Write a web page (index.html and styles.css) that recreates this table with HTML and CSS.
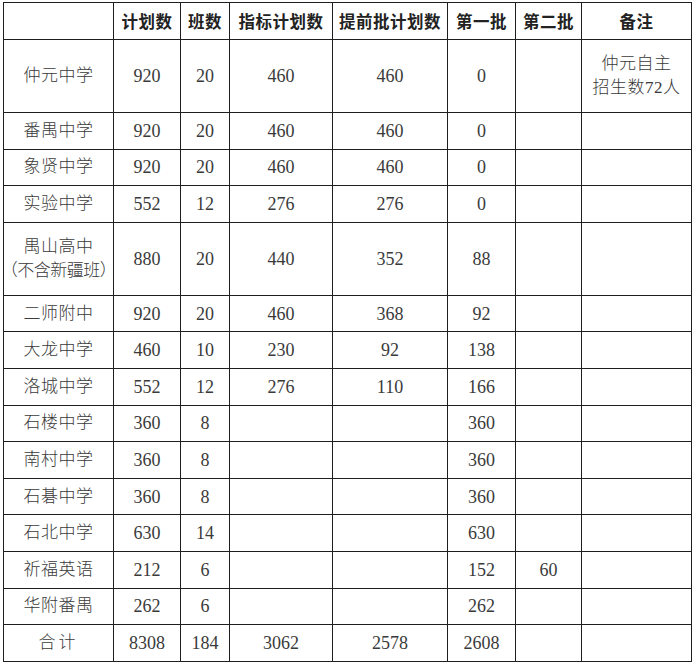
FILE: index.html
```html
<!DOCTYPE html>
<html lang="zh-CN">
<head>
<meta charset="utf-8">
<link rel="stylesheet" href="styles.css">
</head>
<body>
<table class="plan">
  <colgroup>
    <col class="c1"><col class="c2"><col class="c3"><col class="c4"><col class="c5"><col class="c6"><col class="c7"><col class="c8">
  </colgroup>
  <thead>
    <tr class="head">
      <th></th><th>计划数</th><th>班数</th><th>指标计划数</th><th>提前批计划数</th><th>第一批</th><th>第二批</th><th>备注</th>
    </tr>
  </thead>
  <tbody>
    <tr class="tall"><td class="name">仲元中学</td><td>920</td><td>20</td><td>460</td><td>460</td><td>0</td><td></td><td class="note">仲元自主<br>招生数72人</td></tr>
    <tr><td class="name">番禺中学</td><td>920</td><td>20</td><td>460</td><td>460</td><td>0</td><td></td><td></td></tr>
    <tr><td class="name">象贤中学</td><td>920</td><td>20</td><td>460</td><td>460</td><td>0</td><td></td><td></td></tr>
    <tr><td class="name">实验中学</td><td>552</td><td>12</td><td>276</td><td>276</td><td>0</td><td></td><td></td></tr>
    <tr class="tall"><td class="name">禺山高中<br><span class="paren">（不含新疆班）</span></td><td>880</td><td>20</td><td>440</td><td>352</td><td>88</td><td></td><td></td></tr>
    <tr><td class="name">二师附中</td><td>920</td><td>20</td><td>460</td><td>368</td><td>92</td><td></td><td></td></tr>
    <tr><td class="name">大龙中学</td><td>460</td><td>10</td><td>230</td><td>92</td><td>138</td><td></td><td></td></tr>
    <tr><td class="name">洛城中学</td><td>552</td><td>12</td><td>276</td><td>110</td><td>166</td><td></td><td></td></tr>
    <tr><td class="name">石楼中学</td><td>360</td><td>8</td><td></td><td></td><td>360</td><td></td><td></td></tr>
    <tr><td class="name">南村中学</td><td>360</td><td>8</td><td></td><td></td><td>360</td><td></td><td></td></tr>
    <tr><td class="name">石碁中学</td><td>360</td><td>8</td><td></td><td></td><td>360</td><td></td><td></td></tr>
    <tr><td class="name">石北中学</td><td>630</td><td>14</td><td></td><td></td><td>630</td><td></td><td></td></tr>
    <tr><td class="name">祈福英语</td><td>212</td><td>6</td><td></td><td></td><td>152</td><td>60</td><td></td></tr>
    <tr><td class="name">华附番禺</td><td>262</td><td>6</td><td></td><td></td><td>262</td><td></td><td></td></tr>
    <tr><td class="name total">合计</td><td>8308</td><td>184</td><td>3062</td><td>2578</td><td>2608</td><td></td><td></td></tr>
  </tbody>
</table>
</body>
</html>
```
FILE: styles.css
```css
html, body {
  margin: 0;
  padding: 0;
  background: #ffffff;
}
body {
  padding: 2px 0 0 3px;
}
.plan {
  border-collapse: collapse;
  table-layout: fixed;
  width: 689px;
  font-family: "Liberation Serif", "Noto Sans CJK SC", serif;
  font-size: 18px;
  color: #3a3a3a;
}
.c1 { width: 110px; }
.c2 { width: 67px; }
.c3 { width: 49px; }
.c4 { width: 103px; }
.c5 { width: 115px; }
.c6 { width: 68px; }
.c7 { width: 66px; }
.c8 { width: 110px; }
.plan th, .plan td {
  border: 1px solid #1e1e1e;
  text-align: center;
  vertical-align: middle;
  padding: 0;
  line-height: 24px;
}
.plan tr { height: 36.6px; }
.plan tr.head { height: 37px; }
.plan tr.tall { height: 73px; }
.plan th {
  font-family: "Noto Sans CJK SC", sans-serif;
  font-weight: 700;
  color: #222222;
  font-size: 16.5px;
  letter-spacing: 0.5px;
}
.name, .note {
  font-family: "Liberation Serif", "Noto Sans CJK SC", serif;
  font-size: 17px;
  font-weight: 300;
  letter-spacing: 0.5px;
}
.total {
  letter-spacing: 3px;
  padding-left: 3px;
}
.paren {
  letter-spacing: -0.5px;
  margin-left: -6px;
  margin-right: -6px;
}
.note {
  line-height: 25px;
  padding-top: 2px;
}
```
